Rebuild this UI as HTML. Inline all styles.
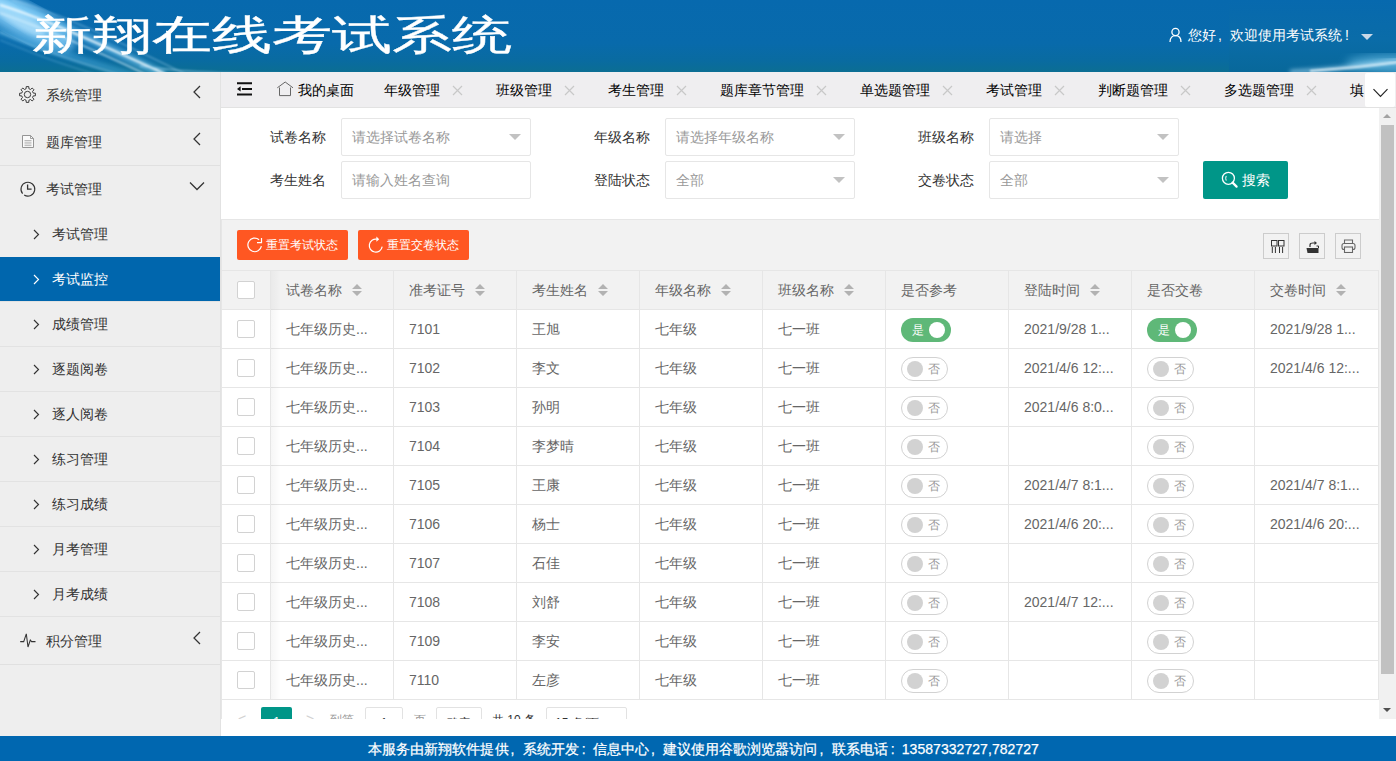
<!DOCTYPE html>
<html><head><meta charset="utf-8"><style>
*{box-sizing:border-box;margin:0;padding:0}
html,body{width:1396px;height:761px;overflow:hidden;background:#fff;font-family:"Liberation Sans",sans-serif;font-size:14px;color:#333}
.abs{position:absolute}
#hdr{left:0;top:0;width:1396px;height:72px;background:#0769ad;overflow:hidden}
#title{left:32px;top:7px;color:#fff;font-size:41px;line-height:56px;white-space:nowrap;transform:scaleX(1.465);transform-origin:0 0;-webkit-text-stroke:0.35px #fff}
#user{left:1188px;top:25px;color:#fff;font-size:14px;line-height:20px;white-space:nowrap}
#side{left:0;top:72px;width:221px;height:664px;background:#eeeeee;border-right:1px solid #e2e2e2}
.si{position:absolute;left:0;width:220px;font-size:14px;color:#333;line-height:20px;white-space:nowrap}
.si .t{position:absolute;left:46px}
.sub .t{left:52px}
#tabs{left:221px;top:72px;width:1175px;height:36px;background:#efeef0;border-bottom:1px solid #e2e2e2}
.tab{position:absolute;top:8px;font-size:14px;line-height:20px;color:#000;white-space:nowrap}
#main{left:221px;top:108px;width:1175px;height:611px;overflow:hidden;background:#fff}
#foot{left:0;top:736px;width:1396px;height:25px;background:#0067b0;color:#fff;font-size:14px;line-height:27px;text-align:center;white-space:nowrap;padding-left:11px;letter-spacing:0.05px;-webkit-text-stroke:0.25px #fff}
.lbl{position:absolute;font-size:14px;color:#333;line-height:20px;white-space:nowrap}
.inp{position:absolute;width:190px;height:38px;border:1px solid #e6e6e6;border-radius:2px;background:#fff;font-size:14px;color:#999;line-height:36px;padding-left:10px;white-space:nowrap}
.tri{position:absolute;right:9px;top:15px;width:0;height:0;border-left:6px solid transparent;border-right:6px solid transparent;border-top:6px solid #c2c2c2}
.btn{position:absolute;height:30px;border-radius:2px;background:#ff5722;color:#fff;font-size:12px;line-height:30px;white-space:nowrap}
.ib{position:absolute;width:26px;height:26px;border:1px solid #ccc}
.cell{position:absolute;font-size:14px;line-height:20px;color:#666;white-space:nowrap}
.cbx{position:absolute;width:18px;height:18px;border:1px solid #d2d2d2;border-radius:2px;background:#fff}
.sw{position:absolute;height:24px;border-radius:20px;font-size:12px;line-height:22px}
.sw.on{width:50px;background:#5fb878;color:#fff}
.sw.off{width:47px;border:1px solid #d2d2d2;background:#fff;color:#999}
.sw.on i{position:absolute;left:28px;top:4px;width:16px;height:16px;border-radius:50%;background:#fff}
.sw.off i{position:absolute;left:5px;top:3px;width:16px;height:16px;border-radius:50%;background:#d2d2d2}
.sw.on em{position:absolute;left:11px;top:1px;font-style:normal}
.sw.off em{position:absolute;left:26px;top:0px;font-style:normal}

</style></head><body>
<div id="hdr" class="abs">
<svg class="abs" style="left:0;top:0" width="1396" height="72" viewBox="0 0 1396 72">
<defs>
<linearGradient id="hb" x1="0" y1="0" x2="0" y2="1">
<stop offset="0" stop-color="#0769ae"/><stop offset="0.6" stop-color="#086aab"/><stop offset="0.85" stop-color="#096ba0"/><stop offset="1" stop-color="#0b6e93"/>
</linearGradient>
<linearGradient id="hr" x1="0" y1="0" x2="0" y2="1">
<stop offset="0" stop-color="#0769ae"/><stop offset="0.55" stop-color="#0a6ca8"/><stop offset="1" stop-color="#08689a"/>
</linearGradient>
<radialGradient id="gl" cx="0.1" cy="0.2" r="0.9">
<stop offset="0" stop-color="#9fdcff" stop-opacity="0.9"/><stop offset="0.5" stop-color="#3a9fdc" stop-opacity="0.5"/><stop offset="1" stop-color="#0769ae" stop-opacity="0"/>
</radialGradient>
<filter id="bl2"><feGaussianBlur stdDeviation="2"/></filter>
<filter id="bl1"><feGaussianBlur stdDeviation="0.8"/></filter>
<filter id="bl4"><feGaussianBlur stdDeviation="5"/></filter>
</defs>
<rect width="1396" height="72" fill="url(#hb)"/>
<rect x="1229" width="167" height="72" fill="url(#hr)"/>
<ellipse cx="1396" cy="64" rx="50" ry="9" fill="#7fd0f5" opacity="0.6" filter="url(#bl4)"/>
<g transform="rotate(28 20 18)"><ellipse cx="20" cy="18" rx="60" ry="16" fill="#8fd6ff" opacity="0.55" filter="url(#bl4)"/></g>
<g transform="rotate(32 18 18)"><ellipse cx="18" cy="18" rx="32" ry="8" fill="#e8f8ff" opacity="0.65" filter="url(#bl2)"/></g>
<g transform="rotate(28 20 18)"><ellipse cx="20" cy="18" rx="60" ry="16" fill="#8fd6ff" opacity="0.5" filter="url(#bl4)"/></g>
<g filter="url(#bl2)" fill="none">
<path d="M-10 0 C30 10 90 38 165 76" stroke="#8ad6ff" stroke-width="10" opacity="0.45"/>
<path d="M-10 28 C30 43 80 60 135 76" stroke="#5ab8ec" stroke-width="7" opacity="0.4"/>
</g>
<g filter="url(#bl1)" fill="none">
<path d="M0 5 C40 17 100 44 165 74" stroke="#f4fcff" stroke-width="2" opacity="0.9"/>
<path d="M0 13 C40 27 95 50 145 74" stroke="#d5f1ff" stroke-width="1.4" opacity="0.75"/>
<path d="M12 0 C50 10 100 32 185 74" stroke="#c0e8ff" stroke-width="1.2" opacity="0.5"/>
<path d="M0 32 C30 46 70 60 118 74" stroke="#a8def8" stroke-width="1.3" opacity="0.6"/>
<path d="M0 40 C30 52 60 64 95 74" stroke="#8acdf0" stroke-width="1" opacity="0.45"/>
<path d="M140 66 C180 72 230 74 280 74" stroke="#bfe8ff" stroke-width="1.5" opacity="0.5"/>
</g>
<g filter="url(#bl2)" fill="none">
<path d="M1290 72 C1330 70 1370 65 1400 60" stroke="#bfe9ff" stroke-width="4" opacity="0.6"/>
</g>
<g filter="url(#bl1)" fill="none">
<path d="M1310 71 C1340 69 1370 66 1400 62" stroke="#f4fcff" stroke-width="1.8" opacity="0.9"/>
</g>
</svg>

<div id="title" class="abs">新翔在线考试系统</div>
<svg class="abs" style="left:1168px;top:27px" width="16" height="16" viewBox="0 0 16 16"><circle cx="7.5" cy="5" r="3.6" fill="none" stroke="#fff" stroke-width="1.3"/><path d="M2 15 C2 10.5 4.5 8.6 7.5 8.6 C10.5 8.6 13 10.5 13 15" fill="none" stroke="#fff" stroke-width="1.3"/></svg>
<div id="user" class="abs">您好<span style="display:inline-block;width:14px;padding-left:2px">,</span>欢迎使用考试系统<span style="display:inline-block;width:14px;padding-left:3px">!</span></div>
<div class="abs" style="left:1361px;top:34px;width:0;height:0;border-left:6px solid transparent;border-right:6px solid transparent;border-top:6px solid #c9d9e8"></div>
</div>
<div id="side" class="abs">
<div class="si" style="top:0px;height:47px;border-bottom:1px solid #e0e0e0;"><svg class="abs" style="left:19px;top:14px" width="17" height="17" viewBox="0 0 17 17"><path d="M7.07 2.78 L7.25 0.60 L9.75 0.60 L9.93 2.78 L11.54 3.44 L13.20 2.03 L14.97 3.80 L13.56 5.46 L14.22 7.07 L16.40 7.25 L16.40 9.75 L14.22 9.93 L13.56 11.54 L14.97 13.20 L13.20 14.97 L11.54 13.56 L9.93 14.22 L9.75 16.40 L7.25 16.40 L7.07 14.22 L5.46 13.56 L3.80 14.97 L2.03 13.20 L3.44 11.54 L2.78 9.93 L0.60 9.75 L0.60 7.25 L2.78 7.07 L3.44 5.46 L2.03 3.80 L3.80 2.03 L5.46 3.44 Z" fill="none" stroke="#333" stroke-width="0.95" stroke-linejoin="round"/><circle cx="8.5" cy="8.5" r="3.2" fill="none" stroke="#333" stroke-width="0.95"/></svg><span class="t" style="top:13px">系统管理</span><svg class="abs" style="left:192px;top:13px" width="10" height="14" viewBox="0 0 10 14"><path d="M8 1 L2 7 L8 13" fill="none" stroke="#333" stroke-width="1.25"/></svg></div>
<div class="si" style="top:47px;height:47px;border-bottom:1px solid #e0e0e0;"><svg class="abs" style="left:22px;top:16px" width="12" height="13" viewBox="0 0 12 13"><path d="M0.5 0.5h8l3 3v9H0.5z" fill="#fafafa" stroke="#8a8a8a" stroke-width="0.9"/><path d="M8.5 0.5v3h3" fill="none" stroke="#8a8a8a" stroke-width="0.8"/><path d="M2.5 5.5h7M2.5 7.2h7M2.5 8.9h7M2.5 10.6h7" stroke="#b0b0b0" stroke-width="0.9"/></svg><span class="t" style="top:13px">题库管理</span><svg class="abs" style="left:192px;top:13px" width="10" height="14" viewBox="0 0 10 14"><path d="M8 1 L2 7 L8 13" fill="none" stroke="#333" stroke-width="1.25"/></svg></div>
<div class="si" style="top:94px;height:46px;"><svg class="abs" style="left:19px;top:14px" width="18" height="18" viewBox="0 0 18 18"><path d="M3.6 13.6 A6.9 6.9 0 1 1 5.2 15" fill="none" stroke="#333" stroke-width="1.1"/><path d="M8.6 4.6v4.6h4" fill="none" stroke="#333" stroke-width="1.3"/></svg><span class="t" style="top:13px">考试管理</span><svg class="abs" style="left:189px;top:15px" width="16" height="10" viewBox="0 0 16 10"><path d="M1 1.5 L8 8.5 L15 1.5" fill="none" stroke="#333" stroke-width="1.25"/></svg></div>
<div class="si sub" style="top:140px;height:45px;color:#333"><svg class="abs" style="left:33px;top:17px" width="7" height="11" viewBox="0 0 7 11"><path d="M1 1 L5.5 5.5 L1 10" fill="none" stroke="#333" stroke-width="1.15"/></svg><span class="t" style="top:12px">考试管理</span></div>
<div class="si sub" style="top:185px;height:45px;background:#0066ad;border-bottom:1px solid #e2e2e2;color:#fff"><svg class="abs" style="left:33px;top:17px" width="7" height="11" viewBox="0 0 7 11"><path d="M1 1 L5.5 5.5 L1 10" fill="none" stroke="#fff" stroke-width="1.15"/></svg><span class="t" style="top:12px">考试监控</span></div>
<div class="si sub" style="top:230px;height:45px;border-bottom:1px solid #e2e2e2;color:#333"><svg class="abs" style="left:33px;top:17px" width="7" height="11" viewBox="0 0 7 11"><path d="M1 1 L5.5 5.5 L1 10" fill="none" stroke="#333" stroke-width="1.15"/></svg><span class="t" style="top:12px">成绩管理</span></div>
<div class="si sub" style="top:275px;height:45px;border-bottom:1px solid #e2e2e2;color:#333"><svg class="abs" style="left:33px;top:17px" width="7" height="11" viewBox="0 0 7 11"><path d="M1 1 L5.5 5.5 L1 10" fill="none" stroke="#333" stroke-width="1.15"/></svg><span class="t" style="top:12px">逐题阅卷</span></div>
<div class="si sub" style="top:320px;height:45px;border-bottom:1px solid #e2e2e2;color:#333"><svg class="abs" style="left:33px;top:17px" width="7" height="11" viewBox="0 0 7 11"><path d="M1 1 L5.5 5.5 L1 10" fill="none" stroke="#333" stroke-width="1.15"/></svg><span class="t" style="top:12px">逐人阅卷</span></div>
<div class="si sub" style="top:365px;height:45px;border-bottom:1px solid #e2e2e2;color:#333"><svg class="abs" style="left:33px;top:17px" width="7" height="11" viewBox="0 0 7 11"><path d="M1 1 L5.5 5.5 L1 10" fill="none" stroke="#333" stroke-width="1.15"/></svg><span class="t" style="top:12px">练习管理</span></div>
<div class="si sub" style="top:410px;height:45px;border-bottom:1px solid #e2e2e2;color:#333"><svg class="abs" style="left:33px;top:17px" width="7" height="11" viewBox="0 0 7 11"><path d="M1 1 L5.5 5.5 L1 10" fill="none" stroke="#333" stroke-width="1.15"/></svg><span class="t" style="top:12px">练习成绩</span></div>
<div class="si sub" style="top:455px;height:45px;border-bottom:1px solid #e2e2e2;color:#333"><svg class="abs" style="left:33px;top:17px" width="7" height="11" viewBox="0 0 7 11"><path d="M1 1 L5.5 5.5 L1 10" fill="none" stroke="#333" stroke-width="1.15"/></svg><span class="t" style="top:12px">月考管理</span></div>
<div class="si sub" style="top:500px;height:45px;border-bottom:1px solid #e2e2e2;color:#333"><svg class="abs" style="left:33px;top:17px" width="7" height="11" viewBox="0 0 7 11"><path d="M1 1 L5.5 5.5 L1 10" fill="none" stroke="#333" stroke-width="1.15"/></svg><span class="t" style="top:12px">月考成绩</span></div>
<div class="si" style="top:546px;height:47px;border-bottom:1px solid #e0e0e0;"><svg class="abs" style="left:19px;top:15px" width="18" height="16" viewBox="0 0 18 16"><path d="M1.2 8.6H4.7L7.3 0.8L9 14L11.3 7L12.6 8.6H16.5" fill="none" stroke="#333" stroke-width="1.05" stroke-linejoin="miter"/></svg><span class="t" style="top:13px">积分管理</span><svg class="abs" style="left:192px;top:13px" width="10" height="14" viewBox="0 0 10 14"><path d="M8 1 L2 7 L8 13" fill="none" stroke="#333" stroke-width="1.25"/></svg></div>
</div>
<div id="tabs" class="abs">
<svg class="abs" style="left:15px;top:10px" width="17" height="14" viewBox="0 0 17 14"><path d="M1 1.3h15M6 6.9h10M1 12.6h15" stroke="#111" stroke-width="2"/><path d="M1 6.9 L4.6 4.2 V9.6 Z" fill="#111"/></svg>
<svg class="abs" style="left:55px;top:9px" width="18" height="16" viewBox="0 0 18 16"><path d="M1.3 6.8 L9.2 1 L17 6.8 M3.5 6.5 V14.6 H14.5 V6.5" fill="none" stroke="#666" stroke-width="1" stroke-linejoin="miter"/></svg>
<span class="tab" style="left:77px">我的桌面</span>
<span class="tab" style="left:163px">年级管理</span>
<svg class="abs" style="left:231px;top:13px" width="11" height="11" viewBox="0 0 11 11"><path d="M1 1L10 10M10 1L1 10" stroke="#c8c8c8" stroke-width="1.2"/></svg>
<span class="tab" style="left:275px">班级管理</span>
<svg class="abs" style="left:343px;top:13px" width="11" height="11" viewBox="0 0 11 11"><path d="M1 1L10 10M10 1L1 10" stroke="#c8c8c8" stroke-width="1.2"/></svg>
<span class="tab" style="left:387px">考生管理</span>
<svg class="abs" style="left:455px;top:13px" width="11" height="11" viewBox="0 0 11 11"><path d="M1 1L10 10M10 1L1 10" stroke="#c8c8c8" stroke-width="1.2"/></svg>
<span class="tab" style="left:499px">题库章节管理</span>
<svg class="abs" style="left:595px;top:13px" width="11" height="11" viewBox="0 0 11 11"><path d="M1 1L10 10M10 1L1 10" stroke="#c8c8c8" stroke-width="1.2"/></svg>
<span class="tab" style="left:639px">单选题管理</span>
<svg class="abs" style="left:721px;top:13px" width="11" height="11" viewBox="0 0 11 11"><path d="M1 1L10 10M10 1L1 10" stroke="#c8c8c8" stroke-width="1.2"/></svg>
<span class="tab" style="left:765px">考试管理</span>
<svg class="abs" style="left:833px;top:13px" width="11" height="11" viewBox="0 0 11 11"><path d="M1 1L10 10M10 1L1 10" stroke="#c8c8c8" stroke-width="1.2"/></svg>
<span class="tab" style="left:877px">判断题管理</span>
<svg class="abs" style="left:959px;top:13px" width="11" height="11" viewBox="0 0 11 11"><path d="M1 1L10 10M10 1L1 10" stroke="#c8c8c8" stroke-width="1.2"/></svg>
<span class="tab" style="left:1003px">多选题管理</span>
<svg class="abs" style="left:1085px;top:13px" width="11" height="11" viewBox="0 0 11 11"><path d="M1 1L10 10M10 1L1 10" stroke="#c8c8c8" stroke-width="1.2"/></svg>
<span class="tab" style="left:1129px">填</span>
<div class="abs" style="left:1144px;top:1px;width:30px;height:34px;background:#fff;border-radius:2px"></div>
<svg class="abs" style="left:1151px;top:16px" width="17" height="10" viewBox="0 0 17 10"><path d="M1.5 1.2 L8.5 8.5 L15.5 1.2" fill="none" stroke="#222" stroke-width="1.15"/></svg>
</div>
<div id="main" class="abs">
<span class="lbl" style="left:49px;top:19px">试卷名称</span>
<span class="lbl" style="left:49px;top:62px">考生姓名</span>
<span class="lbl" style="left:373px;top:19px">年级名称</span>
<span class="lbl" style="left:373px;top:62px">登陆状态</span>
<span class="lbl" style="left:697px;top:19px">班级名称</span>
<span class="lbl" style="left:697px;top:62px">交卷状态</span>
<div class="inp" style="left:120px;top:10px">请选择试卷名称<i class="tri"></i></div>
<div class="inp" style="left:120px;top:53px">请输入姓名查询</div>
<div class="inp" style="left:444px;top:10px">请选择年级名称<i class="tri"></i></div>
<div class="inp" style="left:444px;top:53px">全部<i class="tri"></i></div>
<div class="inp" style="left:768px;top:10px">请选择<i class="tri"></i></div>
<div class="inp" style="left:768px;top:53px">全部<i class="tri"></i></div>
<div class="abs" style="left:982px;top:53px;width:85px;height:38px;background:#009688;border-radius:2px;color:#fff;font-size:14px;line-height:38px;white-space:nowrap"><svg class="abs" style="left:18px;top:10px" width="18" height="18" viewBox="0 0 18 18"><circle cx="7.4" cy="7.3" r="6" fill="none" stroke="#fff" stroke-width="1.3"/><path d="M11.6 11.6 L15.6 15.6" stroke="#fff" stroke-width="2.2" stroke-linecap="round"/><path d="M5.2 4.9 Q4.2 7.2 5.2 9.6" fill="none" stroke="#fff" stroke-width="1"/></svg><span class="abs" style="left:39px;top:0">搜索</span></div>
<div class="abs" style="left:0;top:111px;width:1158px;height:1px;background:#e6e6e6"></div>
<div class="abs" style="left:0;top:112px;width:1158px;height:51px;background:#f2f2f2;border-left:1px solid #e6e6e6;border-bottom:1px solid #e6e6e6"></div>
<div class="btn" style="left:16px;top:122px;width:111px"><svg class="abs" style="left:0;top:0" width="30" height="30" viewBox="0 0 30 30"><path d="M24.4 16.1 A6.8 6.8 0 1 1 22.07 9.69" fill="none" stroke="#fff" stroke-width="1.2"/><path d="M24.5 8 V12.7 H20" fill="none" stroke="#fff" stroke-width="1.2"/></svg><span class="abs" style="left:29px">重置考试状态</span></div>
<div class="btn" style="left:137px;top:122px;width:111px"><svg class="abs" style="left:0;top:0" width="30" height="30" viewBox="0 0 30 30"><path d="M24.2 16.7 A6.5 6.5 0 1 1 18.9 9.2" fill="none" stroke="#fff" stroke-width="1.2"/><path d="M18.4 6.6 L21.2 9.2 L18.4 11.8 Z" fill="#fff"/></svg><span class="abs" style="left:29px">重置交卷状态</span></div>
<div class="ib" style="left:1042px;top:125px"></div>
<div class="ib" style="left:1078px;top:125px"></div>
<div class="ib" style="left:1114px;top:125px"></div>
<svg class="abs" style="left:1050px;top:132px" width="14" height="14" viewBox="0 0 14 14"><rect x="0.5" y="0.5" width="5.5" height="5.5" fill="none" stroke="#333" stroke-width="1"/><rect x="7.5" y="0.5" width="5.5" height="5.5" fill="none" stroke="#333" stroke-width="1"/><path d="M1.3 7v6M4.4 7v6M8.5 7v6M11.6 7v6" stroke="#333" stroke-width="1"/></svg>
<svg class="abs" style="left:1085px;top:132px" width="13" height="13" viewBox="0 0 13 13"><path d="M0.5 8 H12.5 V13 H1.5 Z" fill="#333"/><path d="M4 7 V5 Q4 3 7 3 H9" fill="none" stroke="#333" stroke-width="1.2"/><path d="M8.5 1 L11 3 L8.5 5 Z" fill="#333"/><path d="M10.5 6 H12.5 V8" fill="none" stroke="#333"/></svg>
<svg class="abs" style="left:1120px;top:131px" width="15" height="14" viewBox="0 0 15 14"><path d="M3.5 4.5 V1 H11.5 V4.5" fill="none" stroke="#666" stroke-width="1.1"/><rect x="1" y="4.5" width="13" height="6" rx="2" fill="none" stroke="#666" stroke-width="1.1"/><rect x="3.5" y="8" width="8" height="5.5" fill="#f2f2f2" stroke="#666" stroke-width="1.1"/></svg>
<div class="abs" style="left:0;top:163px;width:1158px;height:39px;background:#f2f2f2;border-left:1px solid #e6e6e6;border-bottom:1px solid #e6e6e6"></div>
<div class="abs" style="left:172px;top:163px;width:1px;height:38px;background:#e6e6e6"></div>
<span class="cell" style="left:65px;top:172px">试卷名称</span>
<svg class="abs" style="left:131px;top:176px" width="10" height="12" viewBox="0 0 10 12"><path d="M0 5 L5 0 L10 5 Z M0 7 L5 12 L10 7 Z" fill="#b2b2b2"/></svg>
<div class="abs" style="left:295px;top:163px;width:1px;height:38px;background:#e6e6e6"></div>
<span class="cell" style="left:188px;top:172px">准考证号</span>
<svg class="abs" style="left:254px;top:176px" width="10" height="12" viewBox="0 0 10 12"><path d="M0 5 L5 0 L10 5 Z M0 7 L5 12 L10 7 Z" fill="#b2b2b2"/></svg>
<div class="abs" style="left:418px;top:163px;width:1px;height:38px;background:#e6e6e6"></div>
<span class="cell" style="left:311px;top:172px">考生姓名</span>
<svg class="abs" style="left:377px;top:176px" width="10" height="12" viewBox="0 0 10 12"><path d="M0 5 L5 0 L10 5 Z M0 7 L5 12 L10 7 Z" fill="#b2b2b2"/></svg>
<div class="abs" style="left:541px;top:163px;width:1px;height:38px;background:#e6e6e6"></div>
<span class="cell" style="left:434px;top:172px">年级名称</span>
<svg class="abs" style="left:500px;top:176px" width="10" height="12" viewBox="0 0 10 12"><path d="M0 5 L5 0 L10 5 Z M0 7 L5 12 L10 7 Z" fill="#b2b2b2"/></svg>
<div class="abs" style="left:664px;top:163px;width:1px;height:38px;background:#e6e6e6"></div>
<span class="cell" style="left:557px;top:172px">班级名称</span>
<svg class="abs" style="left:623px;top:176px" width="10" height="12" viewBox="0 0 10 12"><path d="M0 5 L5 0 L10 5 Z M0 7 L5 12 L10 7 Z" fill="#b2b2b2"/></svg>
<div class="abs" style="left:787px;top:163px;width:1px;height:38px;background:#e6e6e6"></div>
<span class="cell" style="left:680px;top:172px">是否参考</span>
<div class="abs" style="left:910px;top:163px;width:1px;height:38px;background:#e6e6e6"></div>
<span class="cell" style="left:803px;top:172px">登陆时间</span>
<svg class="abs" style="left:869px;top:176px" width="10" height="12" viewBox="0 0 10 12"><path d="M0 5 L5 0 L10 5 Z M0 7 L5 12 L10 7 Z" fill="#b2b2b2"/></svg>
<div class="abs" style="left:1033px;top:163px;width:1px;height:38px;background:#e6e6e6"></div>
<span class="cell" style="left:926px;top:172px">是否交卷</span>
<div class="abs" style="left:1157px;top:163px;width:1px;height:38px;background:#e6e6e6"></div>
<span class="cell" style="left:1049px;top:172px">交卷时间</span>
<svg class="abs" style="left:1115px;top:176px" width="10" height="12" viewBox="0 0 10 12"><path d="M0 5 L5 0 L10 5 Z M0 7 L5 12 L10 7 Z" fill="#b2b2b2"/></svg>
<div class="abs" style="left:49px;top:163px;width:1px;height:38px;background:#e6e6e6"></div>
<div class="cbx" style="left:16px;top:173px"></div>
<div class="abs" style="left:0;top:202px;width:1158px;height:39px;border-left:1px solid #e6e6e6;border-bottom:1px solid #e6e6e6"></div>
<div class="abs" style="left:49px;top:202px;width:1px;height:38px;background:#e6e6e6"></div>
<div class="abs" style="left:172px;top:202px;width:1px;height:38px;background:#e6e6e6"></div>
<div class="abs" style="left:295px;top:202px;width:1px;height:38px;background:#e6e6e6"></div>
<div class="abs" style="left:418px;top:202px;width:1px;height:38px;background:#e6e6e6"></div>
<div class="abs" style="left:541px;top:202px;width:1px;height:38px;background:#e6e6e6"></div>
<div class="abs" style="left:664px;top:202px;width:1px;height:38px;background:#e6e6e6"></div>
<div class="abs" style="left:787px;top:202px;width:1px;height:38px;background:#e6e6e6"></div>
<div class="abs" style="left:910px;top:202px;width:1px;height:38px;background:#e6e6e6"></div>
<div class="abs" style="left:1033px;top:202px;width:1px;height:38px;background:#e6e6e6"></div>
<div class="abs" style="left:1157px;top:202px;width:1px;height:38px;background:#e6e6e6"></div>
<div class="cbx" style="left:16px;top:212px"></div>
<span class="cell" style="left:65px;top:211px">七年级历史...</span>
<span class="cell" style="left:188px;top:211px">7101</span>
<span class="cell" style="left:311px;top:211px">王旭</span>
<span class="cell" style="left:434px;top:211px">七年级</span>
<span class="cell" style="left:557px;top:211px">七一班</span>
<span class="cell" style="left:803px;top:211px">2021/9/28 1...</span>
<span class="cell" style="left:1049px;top:211px">2021/9/28 1...</span>
<div class="sw on" style="left:680px;top:210px"><em>是</em><i></i></div>
<div class="sw on" style="left:926px;top:210px"><em>是</em><i></i></div>
<div class="abs" style="left:0;top:241px;width:1158px;height:39px;border-left:1px solid #e6e6e6;border-bottom:1px solid #e6e6e6"></div>
<div class="abs" style="left:49px;top:241px;width:1px;height:38px;background:#e6e6e6"></div>
<div class="abs" style="left:172px;top:241px;width:1px;height:38px;background:#e6e6e6"></div>
<div class="abs" style="left:295px;top:241px;width:1px;height:38px;background:#e6e6e6"></div>
<div class="abs" style="left:418px;top:241px;width:1px;height:38px;background:#e6e6e6"></div>
<div class="abs" style="left:541px;top:241px;width:1px;height:38px;background:#e6e6e6"></div>
<div class="abs" style="left:664px;top:241px;width:1px;height:38px;background:#e6e6e6"></div>
<div class="abs" style="left:787px;top:241px;width:1px;height:38px;background:#e6e6e6"></div>
<div class="abs" style="left:910px;top:241px;width:1px;height:38px;background:#e6e6e6"></div>
<div class="abs" style="left:1033px;top:241px;width:1px;height:38px;background:#e6e6e6"></div>
<div class="abs" style="left:1157px;top:241px;width:1px;height:38px;background:#e6e6e6"></div>
<div class="cbx" style="left:16px;top:251px"></div>
<span class="cell" style="left:65px;top:250px">七年级历史...</span>
<span class="cell" style="left:188px;top:250px">7102</span>
<span class="cell" style="left:311px;top:250px">李文</span>
<span class="cell" style="left:434px;top:250px">七年级</span>
<span class="cell" style="left:557px;top:250px">七一班</span>
<span class="cell" style="left:803px;top:250px">2021/4/6 12:...</span>
<span class="cell" style="left:1049px;top:250px">2021/4/6 12:...</span>
<div class="sw off" style="left:680px;top:249px"><i></i><em>否</em></div>
<div class="sw off" style="left:926px;top:249px"><i></i><em>否</em></div>
<div class="abs" style="left:0;top:280px;width:1158px;height:39px;border-left:1px solid #e6e6e6;border-bottom:1px solid #e6e6e6"></div>
<div class="abs" style="left:49px;top:280px;width:1px;height:38px;background:#e6e6e6"></div>
<div class="abs" style="left:172px;top:280px;width:1px;height:38px;background:#e6e6e6"></div>
<div class="abs" style="left:295px;top:280px;width:1px;height:38px;background:#e6e6e6"></div>
<div class="abs" style="left:418px;top:280px;width:1px;height:38px;background:#e6e6e6"></div>
<div class="abs" style="left:541px;top:280px;width:1px;height:38px;background:#e6e6e6"></div>
<div class="abs" style="left:664px;top:280px;width:1px;height:38px;background:#e6e6e6"></div>
<div class="abs" style="left:787px;top:280px;width:1px;height:38px;background:#e6e6e6"></div>
<div class="abs" style="left:910px;top:280px;width:1px;height:38px;background:#e6e6e6"></div>
<div class="abs" style="left:1033px;top:280px;width:1px;height:38px;background:#e6e6e6"></div>
<div class="abs" style="left:1157px;top:280px;width:1px;height:38px;background:#e6e6e6"></div>
<div class="cbx" style="left:16px;top:290px"></div>
<span class="cell" style="left:65px;top:289px">七年级历史...</span>
<span class="cell" style="left:188px;top:289px">7103</span>
<span class="cell" style="left:311px;top:289px">孙明</span>
<span class="cell" style="left:434px;top:289px">七年级</span>
<span class="cell" style="left:557px;top:289px">七一班</span>
<span class="cell" style="left:803px;top:289px">2021/4/6 8:0...</span>
<div class="sw off" style="left:680px;top:288px"><i></i><em>否</em></div>
<div class="sw off" style="left:926px;top:288px"><i></i><em>否</em></div>
<div class="abs" style="left:0;top:319px;width:1158px;height:39px;border-left:1px solid #e6e6e6;border-bottom:1px solid #e6e6e6"></div>
<div class="abs" style="left:49px;top:319px;width:1px;height:38px;background:#e6e6e6"></div>
<div class="abs" style="left:172px;top:319px;width:1px;height:38px;background:#e6e6e6"></div>
<div class="abs" style="left:295px;top:319px;width:1px;height:38px;background:#e6e6e6"></div>
<div class="abs" style="left:418px;top:319px;width:1px;height:38px;background:#e6e6e6"></div>
<div class="abs" style="left:541px;top:319px;width:1px;height:38px;background:#e6e6e6"></div>
<div class="abs" style="left:664px;top:319px;width:1px;height:38px;background:#e6e6e6"></div>
<div class="abs" style="left:787px;top:319px;width:1px;height:38px;background:#e6e6e6"></div>
<div class="abs" style="left:910px;top:319px;width:1px;height:38px;background:#e6e6e6"></div>
<div class="abs" style="left:1033px;top:319px;width:1px;height:38px;background:#e6e6e6"></div>
<div class="abs" style="left:1157px;top:319px;width:1px;height:38px;background:#e6e6e6"></div>
<div class="cbx" style="left:16px;top:329px"></div>
<span class="cell" style="left:65px;top:328px">七年级历史...</span>
<span class="cell" style="left:188px;top:328px">7104</span>
<span class="cell" style="left:311px;top:328px">李梦晴</span>
<span class="cell" style="left:434px;top:328px">七年级</span>
<span class="cell" style="left:557px;top:328px">七一班</span>
<div class="sw off" style="left:680px;top:327px"><i></i><em>否</em></div>
<div class="sw off" style="left:926px;top:327px"><i></i><em>否</em></div>
<div class="abs" style="left:0;top:358px;width:1158px;height:39px;border-left:1px solid #e6e6e6;border-bottom:1px solid #e6e6e6"></div>
<div class="abs" style="left:49px;top:358px;width:1px;height:38px;background:#e6e6e6"></div>
<div class="abs" style="left:172px;top:358px;width:1px;height:38px;background:#e6e6e6"></div>
<div class="abs" style="left:295px;top:358px;width:1px;height:38px;background:#e6e6e6"></div>
<div class="abs" style="left:418px;top:358px;width:1px;height:38px;background:#e6e6e6"></div>
<div class="abs" style="left:541px;top:358px;width:1px;height:38px;background:#e6e6e6"></div>
<div class="abs" style="left:664px;top:358px;width:1px;height:38px;background:#e6e6e6"></div>
<div class="abs" style="left:787px;top:358px;width:1px;height:38px;background:#e6e6e6"></div>
<div class="abs" style="left:910px;top:358px;width:1px;height:38px;background:#e6e6e6"></div>
<div class="abs" style="left:1033px;top:358px;width:1px;height:38px;background:#e6e6e6"></div>
<div class="abs" style="left:1157px;top:358px;width:1px;height:38px;background:#e6e6e6"></div>
<div class="cbx" style="left:16px;top:368px"></div>
<span class="cell" style="left:65px;top:367px">七年级历史...</span>
<span class="cell" style="left:188px;top:367px">7105</span>
<span class="cell" style="left:311px;top:367px">王康</span>
<span class="cell" style="left:434px;top:367px">七年级</span>
<span class="cell" style="left:557px;top:367px">七一班</span>
<span class="cell" style="left:803px;top:367px">2021/4/7 8:1...</span>
<span class="cell" style="left:1049px;top:367px">2021/4/7 8:1...</span>
<div class="sw off" style="left:680px;top:366px"><i></i><em>否</em></div>
<div class="sw off" style="left:926px;top:366px"><i></i><em>否</em></div>
<div class="abs" style="left:0;top:397px;width:1158px;height:39px;border-left:1px solid #e6e6e6;border-bottom:1px solid #e6e6e6"></div>
<div class="abs" style="left:49px;top:397px;width:1px;height:38px;background:#e6e6e6"></div>
<div class="abs" style="left:172px;top:397px;width:1px;height:38px;background:#e6e6e6"></div>
<div class="abs" style="left:295px;top:397px;width:1px;height:38px;background:#e6e6e6"></div>
<div class="abs" style="left:418px;top:397px;width:1px;height:38px;background:#e6e6e6"></div>
<div class="abs" style="left:541px;top:397px;width:1px;height:38px;background:#e6e6e6"></div>
<div class="abs" style="left:664px;top:397px;width:1px;height:38px;background:#e6e6e6"></div>
<div class="abs" style="left:787px;top:397px;width:1px;height:38px;background:#e6e6e6"></div>
<div class="abs" style="left:910px;top:397px;width:1px;height:38px;background:#e6e6e6"></div>
<div class="abs" style="left:1033px;top:397px;width:1px;height:38px;background:#e6e6e6"></div>
<div class="abs" style="left:1157px;top:397px;width:1px;height:38px;background:#e6e6e6"></div>
<div class="cbx" style="left:16px;top:407px"></div>
<span class="cell" style="left:65px;top:406px">七年级历史...</span>
<span class="cell" style="left:188px;top:406px">7106</span>
<span class="cell" style="left:311px;top:406px">杨士</span>
<span class="cell" style="left:434px;top:406px">七年级</span>
<span class="cell" style="left:557px;top:406px">七一班</span>
<span class="cell" style="left:803px;top:406px">2021/4/6 20:...</span>
<span class="cell" style="left:1049px;top:406px">2021/4/6 20:...</span>
<div class="sw off" style="left:680px;top:405px"><i></i><em>否</em></div>
<div class="sw off" style="left:926px;top:405px"><i></i><em>否</em></div>
<div class="abs" style="left:0;top:436px;width:1158px;height:39px;border-left:1px solid #e6e6e6;border-bottom:1px solid #e6e6e6"></div>
<div class="abs" style="left:49px;top:436px;width:1px;height:38px;background:#e6e6e6"></div>
<div class="abs" style="left:172px;top:436px;width:1px;height:38px;background:#e6e6e6"></div>
<div class="abs" style="left:295px;top:436px;width:1px;height:38px;background:#e6e6e6"></div>
<div class="abs" style="left:418px;top:436px;width:1px;height:38px;background:#e6e6e6"></div>
<div class="abs" style="left:541px;top:436px;width:1px;height:38px;background:#e6e6e6"></div>
<div class="abs" style="left:664px;top:436px;width:1px;height:38px;background:#e6e6e6"></div>
<div class="abs" style="left:787px;top:436px;width:1px;height:38px;background:#e6e6e6"></div>
<div class="abs" style="left:910px;top:436px;width:1px;height:38px;background:#e6e6e6"></div>
<div class="abs" style="left:1033px;top:436px;width:1px;height:38px;background:#e6e6e6"></div>
<div class="abs" style="left:1157px;top:436px;width:1px;height:38px;background:#e6e6e6"></div>
<div class="cbx" style="left:16px;top:446px"></div>
<span class="cell" style="left:65px;top:445px">七年级历史...</span>
<span class="cell" style="left:188px;top:445px">7107</span>
<span class="cell" style="left:311px;top:445px">石佳</span>
<span class="cell" style="left:434px;top:445px">七年级</span>
<span class="cell" style="left:557px;top:445px">七一班</span>
<div class="sw off" style="left:680px;top:444px"><i></i><em>否</em></div>
<div class="sw off" style="left:926px;top:444px"><i></i><em>否</em></div>
<div class="abs" style="left:0;top:475px;width:1158px;height:39px;border-left:1px solid #e6e6e6;border-bottom:1px solid #e6e6e6"></div>
<div class="abs" style="left:49px;top:475px;width:1px;height:38px;background:#e6e6e6"></div>
<div class="abs" style="left:172px;top:475px;width:1px;height:38px;background:#e6e6e6"></div>
<div class="abs" style="left:295px;top:475px;width:1px;height:38px;background:#e6e6e6"></div>
<div class="abs" style="left:418px;top:475px;width:1px;height:38px;background:#e6e6e6"></div>
<div class="abs" style="left:541px;top:475px;width:1px;height:38px;background:#e6e6e6"></div>
<div class="abs" style="left:664px;top:475px;width:1px;height:38px;background:#e6e6e6"></div>
<div class="abs" style="left:787px;top:475px;width:1px;height:38px;background:#e6e6e6"></div>
<div class="abs" style="left:910px;top:475px;width:1px;height:38px;background:#e6e6e6"></div>
<div class="abs" style="left:1033px;top:475px;width:1px;height:38px;background:#e6e6e6"></div>
<div class="abs" style="left:1157px;top:475px;width:1px;height:38px;background:#e6e6e6"></div>
<div class="cbx" style="left:16px;top:485px"></div>
<span class="cell" style="left:65px;top:484px">七年级历史...</span>
<span class="cell" style="left:188px;top:484px">7108</span>
<span class="cell" style="left:311px;top:484px">刘舒</span>
<span class="cell" style="left:434px;top:484px">七年级</span>
<span class="cell" style="left:557px;top:484px">七一班</span>
<span class="cell" style="left:803px;top:484px">2021/4/7 12:...</span>
<div class="sw off" style="left:680px;top:483px"><i></i><em>否</em></div>
<div class="sw off" style="left:926px;top:483px"><i></i><em>否</em></div>
<div class="abs" style="left:0;top:514px;width:1158px;height:39px;border-left:1px solid #e6e6e6;border-bottom:1px solid #e6e6e6"></div>
<div class="abs" style="left:49px;top:514px;width:1px;height:38px;background:#e6e6e6"></div>
<div class="abs" style="left:172px;top:514px;width:1px;height:38px;background:#e6e6e6"></div>
<div class="abs" style="left:295px;top:514px;width:1px;height:38px;background:#e6e6e6"></div>
<div class="abs" style="left:418px;top:514px;width:1px;height:38px;background:#e6e6e6"></div>
<div class="abs" style="left:541px;top:514px;width:1px;height:38px;background:#e6e6e6"></div>
<div class="abs" style="left:664px;top:514px;width:1px;height:38px;background:#e6e6e6"></div>
<div class="abs" style="left:787px;top:514px;width:1px;height:38px;background:#e6e6e6"></div>
<div class="abs" style="left:910px;top:514px;width:1px;height:38px;background:#e6e6e6"></div>
<div class="abs" style="left:1033px;top:514px;width:1px;height:38px;background:#e6e6e6"></div>
<div class="abs" style="left:1157px;top:514px;width:1px;height:38px;background:#e6e6e6"></div>
<div class="cbx" style="left:16px;top:524px"></div>
<span class="cell" style="left:65px;top:523px">七年级历史...</span>
<span class="cell" style="left:188px;top:523px">7109</span>
<span class="cell" style="left:311px;top:523px">李安</span>
<span class="cell" style="left:434px;top:523px">七年级</span>
<span class="cell" style="left:557px;top:523px">七一班</span>
<div class="sw off" style="left:680px;top:522px"><i></i><em>否</em></div>
<div class="sw off" style="left:926px;top:522px"><i></i><em>否</em></div>
<div class="abs" style="left:0;top:553px;width:1158px;height:39px;border-left:1px solid #e6e6e6;border-bottom:1px solid #e6e6e6"></div>
<div class="abs" style="left:49px;top:553px;width:1px;height:38px;background:#e6e6e6"></div>
<div class="abs" style="left:172px;top:553px;width:1px;height:38px;background:#e6e6e6"></div>
<div class="abs" style="left:295px;top:553px;width:1px;height:38px;background:#e6e6e6"></div>
<div class="abs" style="left:418px;top:553px;width:1px;height:38px;background:#e6e6e6"></div>
<div class="abs" style="left:541px;top:553px;width:1px;height:38px;background:#e6e6e6"></div>
<div class="abs" style="left:664px;top:553px;width:1px;height:38px;background:#e6e6e6"></div>
<div class="abs" style="left:787px;top:553px;width:1px;height:38px;background:#e6e6e6"></div>
<div class="abs" style="left:910px;top:553px;width:1px;height:38px;background:#e6e6e6"></div>
<div class="abs" style="left:1033px;top:553px;width:1px;height:38px;background:#e6e6e6"></div>
<div class="abs" style="left:1157px;top:553px;width:1px;height:38px;background:#e6e6e6"></div>
<div class="cbx" style="left:16px;top:563px"></div>
<span class="cell" style="left:65px;top:562px">七年级历史...</span>
<span class="cell" style="left:188px;top:562px">7110</span>
<span class="cell" style="left:311px;top:562px">左彦</span>
<span class="cell" style="left:434px;top:562px">七年级</span>
<span class="cell" style="left:557px;top:562px">七一班</span>
<div class="sw off" style="left:680px;top:561px"><i></i><em>否</em></div>
<div class="sw off" style="left:926px;top:561px"><i></i><em>否</em></div>
<div class="abs" style="left:50px;top:163px;width:10px;height:428px;background:linear-gradient(to right,rgba(0,0,0,0.035),rgba(0,0,0,0))"></div>
<div class="abs" style="left:0;top:592px;width:1px;height:19px;background:#e6e6e6"></div>
<div class="abs" style="left:40px;top:599px;width:31px;height:30px;background:#009688;border-radius:2px;color:#fff;font-size:12px;text-align:center;line-height:31px">1</div>
<span class="abs" style="left:17px;top:603px;color:#d2d2d2;font-size:14px">&lt;</span>
<span class="abs" style="left:85px;top:603px;color:#d2d2d2;font-size:14px">&gt;</span>
<span class="abs" style="left:109px;top:604px;color:#999;font-size:12px;white-space:nowrap">到第</span>
<div class="abs" style="left:144px;top:599px;width:38px;height:30px;border:1px solid #e2e2e2;border-radius:2px;font-size:12px;text-align:center;line-height:30px;color:#333">1</div>
<span class="abs" style="left:193px;top:604px;color:#999;font-size:12px">页</span>
<div class="abs" style="left:215px;top:599px;width:46px;height:30px;border:1px solid #e2e2e2;border-radius:2px;font-size:12px;text-align:center;line-height:30px;color:#333">确定</div>
<span class="abs" style="left:271px;top:604px;color:#333;font-size:12px;white-space:nowrap">共 10 条</span>
<div class="abs" style="left:325px;top:599px;width:81px;height:30px;border:1px solid #e2e2e2;border-radius:2px;font-size:12px;line-height:30px;color:#333;padding-left:8px;white-space:nowrap">15 条/页<svg class="abs" style="left:64px;top:14px" width="10" height="7" viewBox="0 0 10 7"><path d="M1 1L5 5L9 1" fill="none" stroke="#333" stroke-width="1.2"/></svg></div>
<div class="abs" style="left:1158px;top:0;width:17px;height:611px;background:#f1f1f1"></div>
<div class="abs" style="left:1160px;top:17px;width:13px;height:549px;background:#c1c1c1"></div>
<div class="abs" style="left:1162px;top:6px;width:0;height:0;border-left:4px solid transparent;border-right:4px solid transparent;border-bottom:4px solid #a3a3a3"></div>
<div class="abs" style="left:1162px;top:600px;width:0;height:0;border-left:4px solid transparent;border-right:4px solid transparent;border-top:4px solid #505050"></div>
</div>
<div id="foot" class="abs">本服务由新翔软件提供<span style="display:inline-block;width:14px;text-align:left;padding-left:2px">,</span>系统开发<span style="display:inline-block;width:14px;text-align:left;padding-left:3px">:</span>信息中心<span style="display:inline-block;width:14px;text-align:left;padding-left:2px">,</span>建议使用谷歌浏览器访问<span style="display:inline-block;width:14px;text-align:left;padding-left:2px">,</span>联系电话<span style="display:inline-block;width:14px;text-align:left;padding-left:3px">:</span>13587332727,782727</div>
</body></html>
